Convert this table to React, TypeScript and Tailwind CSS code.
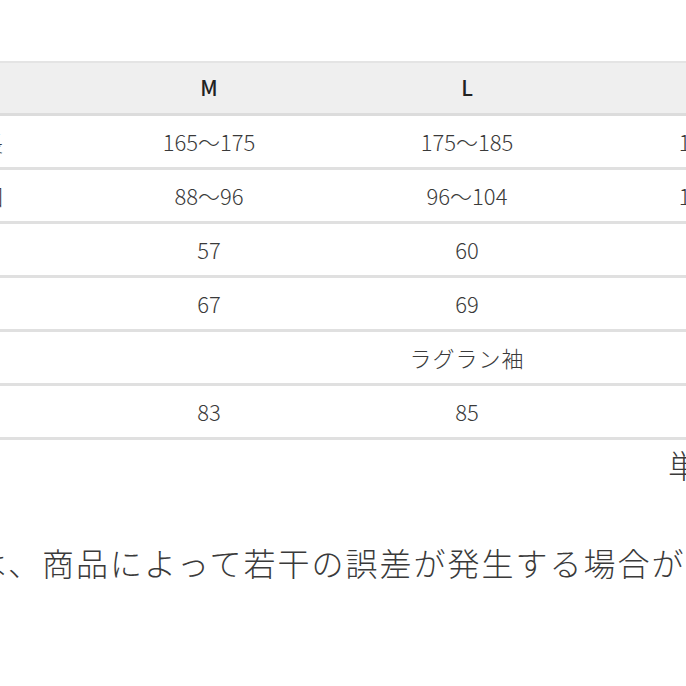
import React from 'react';

interface SizeRow {
  label: string;
  values?: string[];
  merged?: string;
}

const sizes = ['M', 'L', 'XL'];

const rows: SizeRow[] = [
  { label: '適応身長', values: ['165〜175', '175〜185', '185〜195'] },
  { label: '適応胸囲', values: ['88〜96', '96〜104', '104〜112'] },
  { label: '身幅', values: ['57', '60', '63'] },
  { label: '着丈', values: ['67', '69', '71'] },
  { label: '袖', merged: 'ラグラン袖' },
  { label: '裄丈', values: ['83', '85', '87'] },
];

const App: React.FC = () => {
  return (
    <div className="w-[686px] h-[686px] overflow-hidden bg-white text-[#3a3a3a] font-['Noto_Sans_CJK_JP','Noto_Sans',sans-serif]">
      {/* Size table */}
      <div className="pt-[61px]">
        <div className="ml-[-162px] w-[1016px]">
          <div className="grid grid-cols-[242px_258px_258px_258px] h-[55px] bg-[#efefef] border-t-[2px] border-b-[3px] border-t-[#e4e4e4] border-b-[#dcdcdc] items-center text-[21px] font-medium text-[#222]">
            <div className="text-center">サイズ</div>
            {sizes.map((s) => (
              <div key={s} className="text-center">{s}</div>
            ))}
          </div>
          {rows.map((r) => (
            <div
              key={r.label}
              className="grid grid-cols-[242px_258px_258px_258px] h-[54px] border-b-[3px] border-[#e0e0e0] items-center text-[22px] font-light"
            >
              <div className="text-center">{r.label}</div>
              {r.merged ? (
                <div className="col-span-3 text-center text-[22px] tracking-[1px]">{r.merged}</div>
              ) : (
                r.values?.map((v, i) => (
                  <div key={i} className="text-center">{v}</div>
                ))
              )}
            </div>
          ))}
        </div>
      </div>

      {/* Unit */}
      <div className="pl-[668px] pt-[4px] whitespace-nowrap text-[32px] font-light leading-[40px]">
        単位：cm
      </div>

      {/* Note */}
      <div className="ml-[-26px] mt-[58px] whitespace-nowrap text-[32px] tracking-[2px] font-light leading-[40px]">
        は、商品によって若干の誤差が発生する場合があります。
      </div>
    </div>
  );
};

export default App;
